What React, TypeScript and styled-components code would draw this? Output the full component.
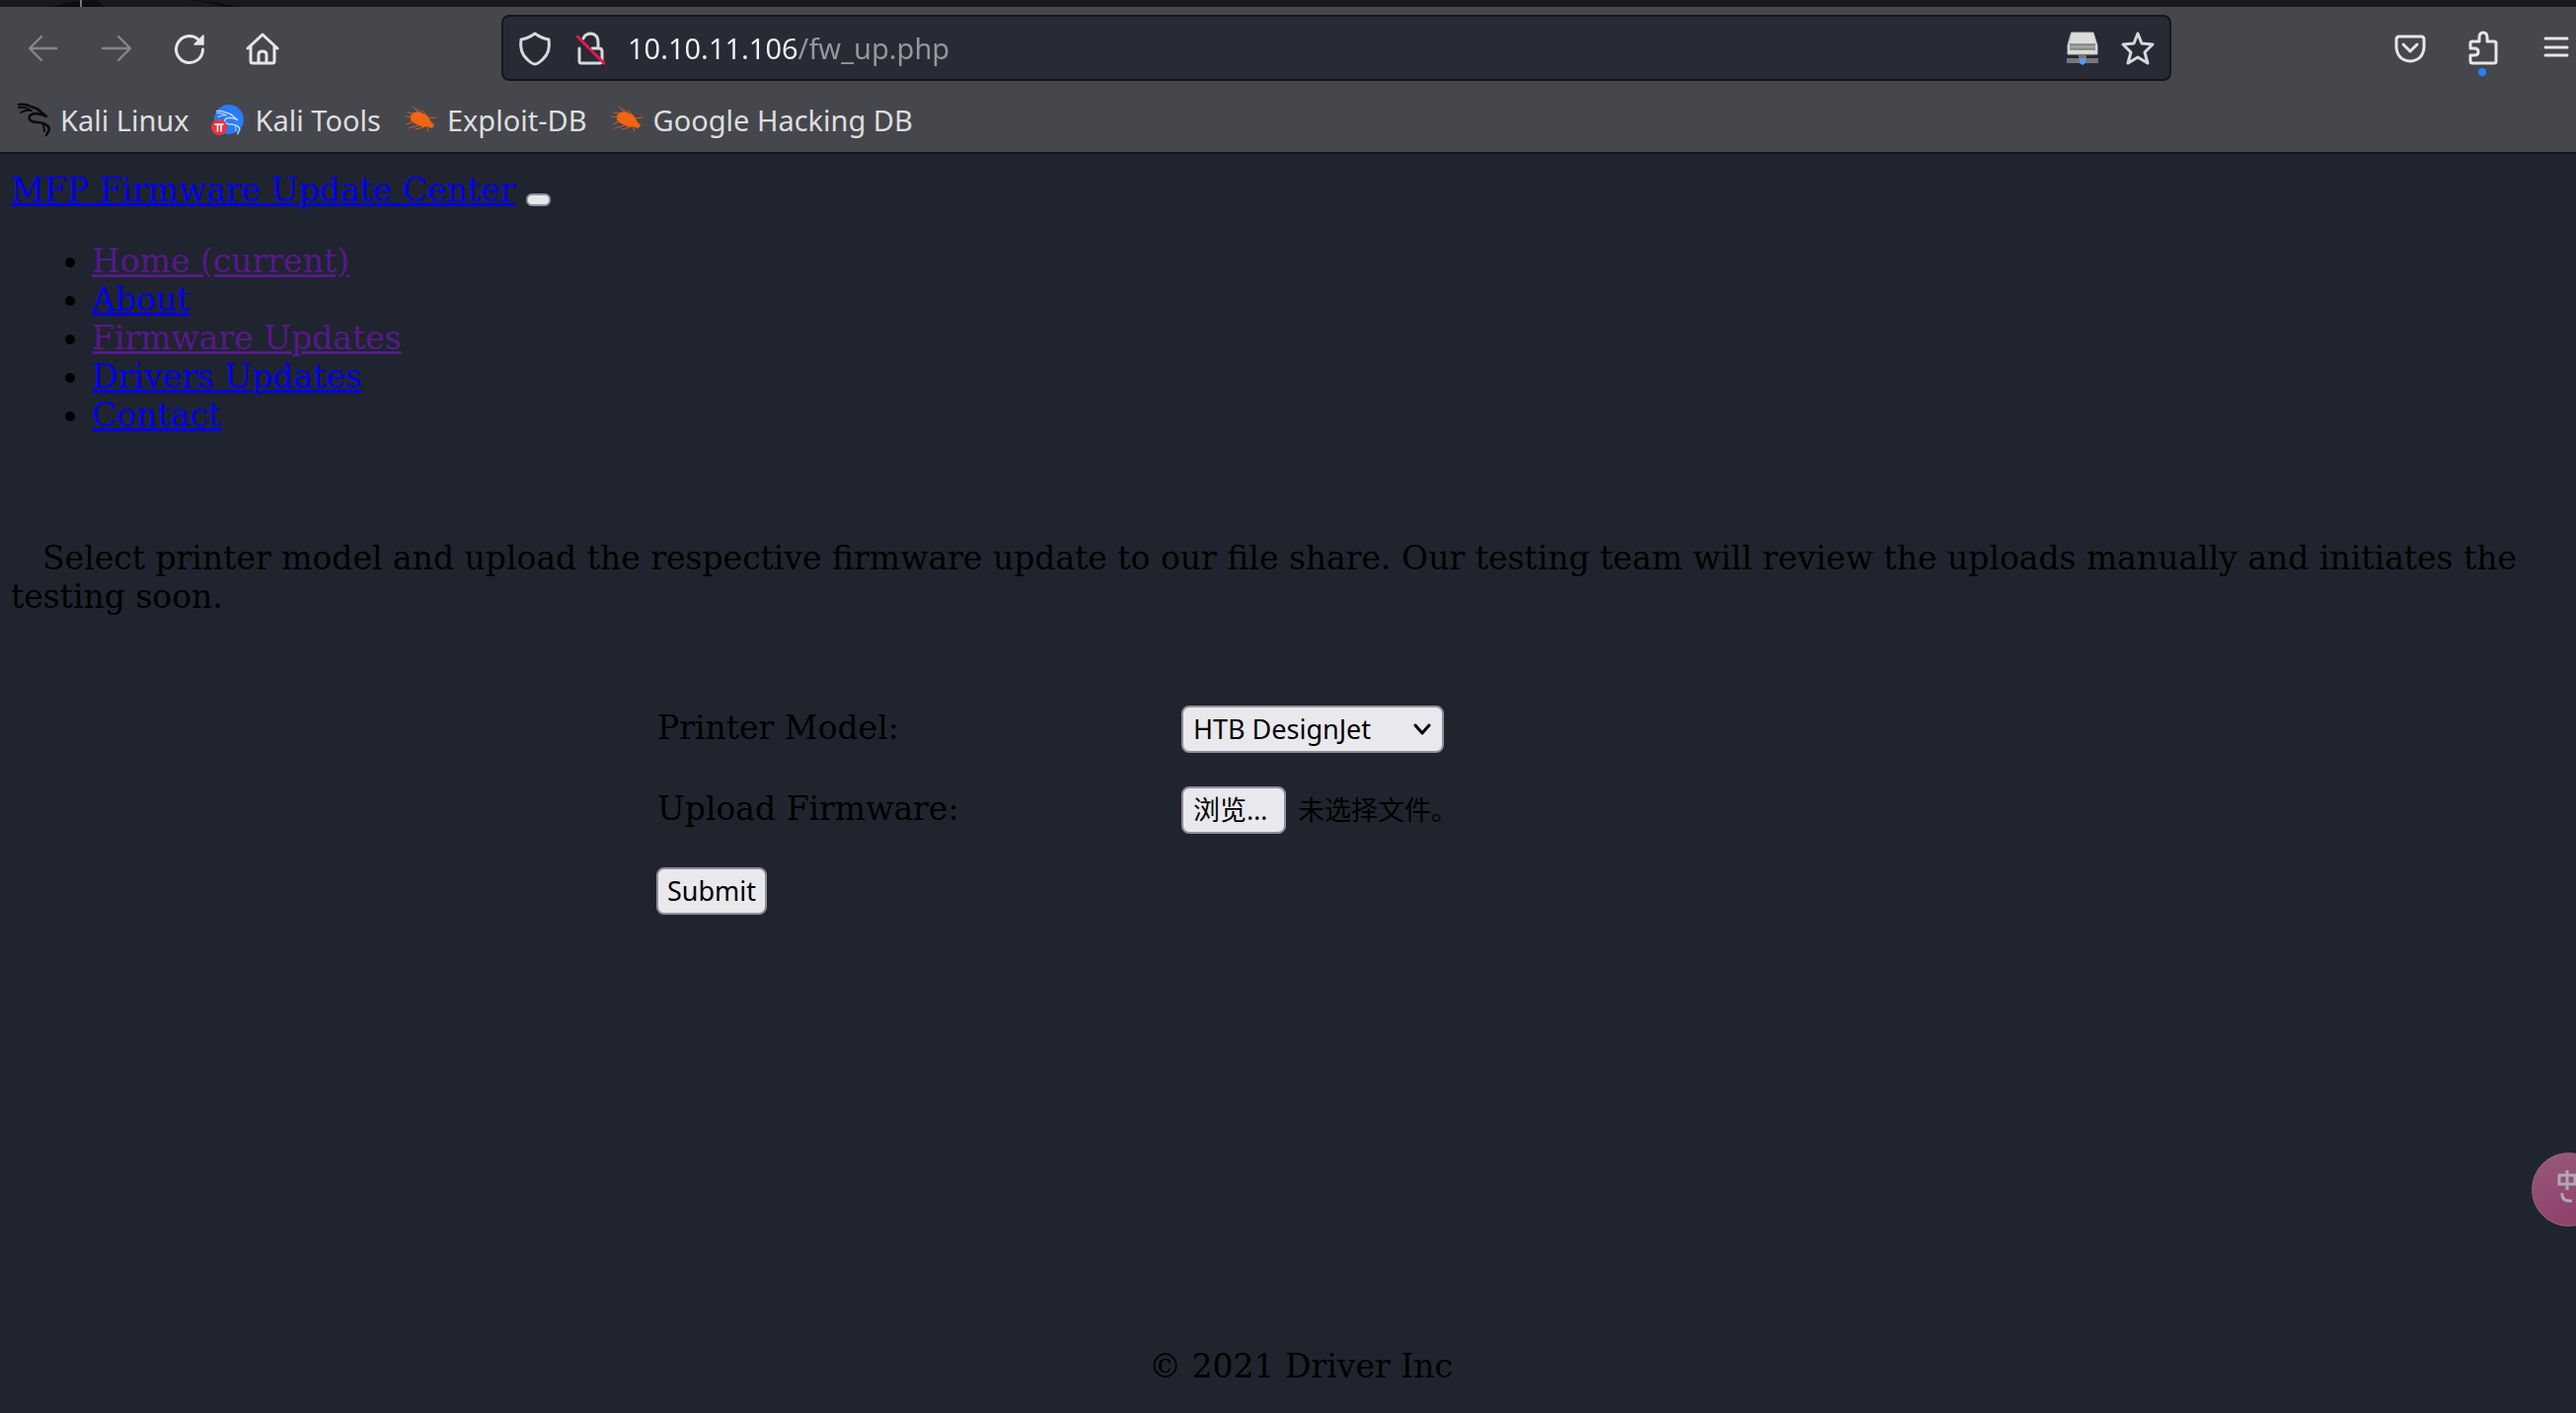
import React from 'react';
import styled, { createGlobalStyle } from 'styled-components';

const uiFont = '"Noto Sans", "Noto Sans CJK SC", sans-serif';
const pageFont = '"DejaVu Serif", serif';

const GlobalStyle = createGlobalStyle`
  *, *::before, *::after { box-sizing: border-box; }
  html, body { margin: 0; background: #20242e; }
  body { overflow-x: hidden; }
`;

const Screen = styled.div`
  display: flex;
  flex-direction: column;
  min-height: 100vh;
  background: #20242e;
`;

const WindowStrip = styled.div`
  height: 7px;
  background: #18191f;
  svg { display: block; }
`;

const Chrome = styled.header`
  background: #45474d;
  border-bottom: 2px solid #14151a;
  font-family: ${uiFont};
`;

const Toolbar = styled.div`
  display: grid;
  grid-template-columns: 508px 1fr 410px;
  align-items: center;
  padding-top: 8px;
`;

const NavGroup = styled.nav`
  display: flex;
  gap: 38px;
  padding-left: 26px;
`;

const ToolGroup = styled.div`
  display: flex;
  gap: 38px;
  justify-content: flex-end;
  padding-right: 2px;
`;

const IconButton = styled.button<{ $dim?: boolean }>`
  display: flex;
  flex: none;
  padding: 0;
  border: 0;
  background: none;
  color: ${(p) => (p.$dim ? '#85868a' : '#e6e6e6')};
`;

const Glyph = styled.svg`
  display: block;
  flex: none;
  width: 36px;
  height: 36px;
  overflow: visible;
  fill: none;
  stroke: currentColor;
  stroke-width: 3;
  stroke-linecap: round;
  stroke-linejoin: round;
`;

const AddressBar = styled.form`
  display: flex;
  align-items: center;
  gap: 20px;
  height: 67px;
  padding: 0 14px;
  border: 2px solid #14151a;
  border-radius: 8px;
  background: #282a36;
  color: #d8d8dc;
`;

const AddressInput = styled.input`
  flex: 1;
  min-width: 0;
  height: 48px;
  padding: 0;
  border: 0;
  outline: 0;
  font: 29px/48px ${uiFont};
  color: transparent;
  background: linear-gradient(90deg, #f2f2f4 172px, #96979d 172px);
  background-clip: text;
  -webkit-background-clip: text;
`;

const Bookmarks = styled.nav`
  display: flex;
  gap: 24px;
  height: 72px;
  padding: 7px 18px 0;
  align-items: center;
`;

const Bookmark = styled.a`
  display: flex;
  align-items: center;
  gap: 7px;
  color: #dededf;
  font-size: 29px;
  line-height: 40px;
  text-decoration: none;
`;

const Page = styled.main`
  flex: 1;
  display: flex;
  flex-direction: column;
  padding: 17px 11px 28px;
  font: 33px/39px ${pageFont};
  color: #000;
`;

const Brand = styled.div`
  display: flex;
  align-items: center;
  gap: 11px;
`;

const PageLink = styled.a<{ $visited?: boolean }>`
  color: ${(p) => (p.$visited ? '#551a8b' : '#0000ee')};
  text-decoration: underline;
`;

const Toggler = styled.button`
  width: 25px;
  height: 13px;
  margin-top: 20px;
  padding: 0;
  border: 2px solid #8f8f9d;
  border-radius: 6px;
  background: #e9e9ed;
`;

const Menu = styled.ul`
  margin: 33px 0 0;
  padding-left: 82px;
`;

const Intro = styled.p`
  margin: 106px 0 0;
  text-indent: 32px;
`;

const FormTable = styled.table`
  width: 900px;
  margin: 74px 0 0 25%;
  border-collapse: collapse;
  td, th {
    height: 82px;
    padding: 0 0 0 7px;
    text-align: left;
    font-weight: normal;
  }
  th { width: 532px; padding-bottom: 4px; padding-left: 8px; }
`;

const controlBox = `
  height: 48px;
  border: 2px solid #8f8f9d;
  border-radius: 8px;
  background: #e9e9ed;
  color: #000;
  font: 27px/44px ${uiFont};
`;

const SelectWrap = styled.div`
  display: grid;
  width: 266px;
  align-items: center;
  > * { grid-area: 1 / 1; }
  svg { justify-self: end; margin-right: 12px; width: 20px; height: 20px; color: #000; pointer-events: none; }
`;

const Select = styled.select`
  ${controlBox}
  appearance: none;
  padding: 0 10px;
`;

const Submit = styled.button`
  ${controlBox}
  padding: 0 9px;
`;

const FileRow = styled.div`
  display: flex;
  align-items: center;
  gap: 12px;
  font: 27px/44px ${uiFont};
`;

const BrowseLabel = styled.label`
  ${controlBox}
  min-width: 106px;
  padding: 0 10px;
  white-space: nowrap;
`;

const FileInput = styled.input`
  position: absolute;
  width: 1px;
  height: 1px;
  opacity: 0;
`;

const Footer = styled.footer`
  margin-top: auto;
  padding-left: 26px;
  text-align: center;
`;

const ImeBadge = styled.button`
  position: fixed;
  right: -30px;
  top: 1168px;
  width: 75px;
  height: 75px;
  padding: 0 0 0 4px;
  border: 1px solid #96647f;
  border-radius: 50%;
  background: linear-gradient(160deg, #96597c, #8d3d68);
  color: #b0a9b4;
`;

const Bug = () => (
  <Glyph viewBox="0 0 36 36">
    <path stroke="none" fill="#f26411" d="M6 13L9 10L14 9L18 11L22 12L25 16L27 20L30 24L27 26L22 24L19 25L14 23L10 21L6 18Z" />
    <path stroke="#c9601f" strokeWidth="1" d="M9 11L3 10M8 15L1 14M9 19L2 22M14 23L4 26M19 25L11 27M22 24L24 29M13 9L8 4M18 11L12 6M22 13L18 8M24 16L32 15M26 20L30 22" />
  </Glyph>
);

const Dragon = ({ color, width = 2 }: { color: string; width?: number }) => (
  <g fill="none" stroke={color} strokeWidth={width}>
    <path d="M1 2Q8 1 13 4Q19 5 23 9L29 14L24 12L18 11Q10 12 12 17Q14 20 21 20Q31 21 32 27L29 33" />
    <path d="M1 5Q7 4 12 7M3 10Q8 7 14 8M20 6L24 10M26 22L27 29" strokeWidth={width * 0.75} />
  </g>
);

const menu = [
  { label: 'Home (current)', visited: true },
  { label: 'About' },
  { label: 'Firmware Updates', visited: true },
  { label: 'Drivers Updates' },
  { label: 'Contact' },
];

export default function App() {
  return (
    <Screen>
      <GlobalStyle />
      <WindowStrip>
        <svg width="260" height="7" aria-hidden="true">
          <path d="M52 7Q62 3 80 1L98 0L106 7ZM190 0Q220 1 240 7L226 7Q212 2 190 0Z" fill="#0c0d11" />
          <path d="M82 0V7" stroke="#777" strokeWidth="2" />
        </svg>
      </WindowStrip>
      <Chrome>
        <Toolbar>
          <NavGroup aria-label="Browser">
            <IconButton $dim aria-label="Back">
              <Glyph viewBox="0 0 36 36"><path strokeWidth="2.4" d="M31 18H4M16 6L4 18L16 30" /></Glyph>
            </IconButton>
            <IconButton $dim aria-label="Forward">
              <Glyph viewBox="0 0 36 36"><path strokeWidth="2.4" d="M4 18H31M20 6L32 18L20 30" /></Glyph>
            </IconButton>
            <IconButton aria-label="Reload">
              <Glyph viewBox="0 0 36 36">
                <path d="M31.5 19A13.500 13.500 0 1 1 27 9" />
                <path d="M32 5V14H23Z" fill="currentColor" strokeWidth="1.5" />
              </Glyph>
            </IconButton>
            <IconButton aria-label="Home">
              <Glyph viewBox="0 0 36 36">
                <path d="M3 18L18 4L33 18M6 16V31Q6 33 8 33H28Q30 33 30 31V16M14 32V24Q14 21 18 21T22 24V32" />
              </Glyph>
            </IconButton>
          </NavGroup>
          <AddressBar onSubmit={(e) => e.preventDefault()}>
            <Glyph viewBox="0 0 36 36"><path d="M18 3Q25 8 32 9Q34 22 26 29Q21 34 18 34Q15 34 10 29Q2 22 4 9Q11 8 18 3Z" /></Glyph>
            <Glyph viewBox="0 0 36 36">
              <path d="M11 8Q13 3 19 3Q26 4 26 12V17M7 18V31Q7 33 9 33H27Q30 33 30 30V21Q30 18 27 18H20" />
              <path d="M5 6L32 33" stroke="#e01b48" />
            </Glyph>
            <AddressInput aria-label="Address" defaultValue="10.10.11.106/fw_up.php" />
            <Glyph viewBox="0 0 36 36">
              <path d="M7 2H29L33 15V24H3V15Z" fill="#dcdcdc" stroke="#c4c4c4" strokeWidth="1" />
              <path d="M5 13H31V20H5Z" fill="#8f8f8c" stroke="none" />
              <path d="M5 16.500H31" stroke="#b5b5b2" strokeWidth="1" />
              <path d="M14 25H22V28H34V33H2V28H14Z" fill="#777" stroke="none" />
              <path d="M15 28H21V33L18 35L15 33Z" fill="#5b96ee" stroke="none" />
            </Glyph>
            <Glyph viewBox="0 0 36 36"><path d="M18 3L22 13L33 14L25 22L28 33L18 27L8 33L11 22L3 14L14 13Z" /></Glyph>
          </AddressBar>
          <ToolGroup>
            <IconButton aria-label="Pocket">
              <Glyph viewBox="0 0 36 36"><path d="M7 6H29Q32 6 32 9V17Q31 30 18 31Q5 30 4 17V9Q4 6 7 6ZM11 14L18 21L25 14" /></Glyph>
            </IconButton>
            <IconButton aria-label="Extensions">
              <Glyph viewBox="0 0 36 36">
                <path d="M5 13Q5 11 7 11H14V7Q14 2 18 2T22 7V11H29Q31 11 31 13V31Q31 33 29 33H7Q5 33 5 31V25H9Q13 25 13 21.500T9 18H5Z" />
                <circle cx="17" cy="42" r="4" fill="#2a7fff" stroke="none" />
              </Glyph>
            </IconButton>
            <IconButton aria-label="Menu">
              <Glyph viewBox="0 0 36 36"><path d="M7 8H29M7 17H29M7 25H29" /></Glyph>
            </IconButton>
          </ToolGroup>
        </Toolbar>
        <Bookmarks aria-label="Bookmarks">
          <Bookmark href="#"><Glyph viewBox="0 0 36 36"><Dragon color="#0b0b0c" width={2.6} /></Glyph>Kali Linux</Bookmark>
          <Bookmark href="#">
            <Glyph viewBox="0 0 36 36">
              <circle cx="16" cy="17" r="15" fill="#2a7bf5" stroke="none" />
              <g transform="translate(3 7) scale(0.75)"><Dragon color="#bcd8ff" width={1.8} /></g>
              <circle cx="6" cy="25" r="8" fill="#ee3340" stroke="none" />
              <path d="M2 22H10M4.500 22V29M8 22V29" stroke="#fff" strokeWidth="1.600" />
            </Glyph>
            Kali Tools
          </Bookmark>
          <Bookmark href="#"><Bug />Exploit-DB</Bookmark>
          <Bookmark href="#"><Bug />Google Hacking DB</Bookmark>
        </Bookmarks>
      </Chrome>
      <Page>
        <Brand>
          <PageLink href="#">MFP Firmware Update Center</PageLink>
          <Toggler aria-label="Toggle navigation" />
        </Brand>
        <Menu>
          {menu.map((m) => (
            <li key={m.label}><PageLink href="#" $visited={m.visited}>{m.label}</PageLink></li>
          ))}
        </Menu>
        <Intro>
          Select printer model and upload the respective firmware update to our file share. Our testing team will review the
          uploads manually and initiates the testing soon.
        </Intro>
        <form onSubmit={(e) => e.preventDefault()}>
          <FormTable>
            <tbody>
              <tr>
                <th scope="row"><label htmlFor="model">Printer Model:</label></th>
                <td>
                  <SelectWrap>
                    <Select id="model"><option>HTB DesignJet</option></Select>
                    <Glyph viewBox="0 0 20 20"><path d="M3 6L10 14L17 6" /></Glyph>
                  </SelectWrap>
                </td>
              </tr>
              <tr>
                <th scope="row"><label htmlFor="firmware">Upload Firmware:</label></th>
                <td>
                  <FileRow>
                    <FileInput type="file" id="firmware" />
                    <BrowseLabel htmlFor="firmware">浏览…</BrowseLabel>
                    <span>未选择文件。</span>
                  </FileRow>
                </td>
              </tr>
              <tr><td colSpan={2}><Submit type="submit">Submit</Submit></td></tr>
            </tbody>
          </FormTable>
        </form>
        <Footer>© 2021 Driver Inc</Footer>
      </Page>
      <ImeBadge aria-label="Input method">
        <svg width="48" height="48" viewBox="0 0 48 48" fill="none" stroke="currentColor" strokeWidth="3" aria-hidden="true">
          <path d="M12 11H28V20H12ZM20 6V26M15 29Q14 38 25 37M30 36L34 29" />
        </svg>
      </ImeBadge>
    </Screen>
  );
}
